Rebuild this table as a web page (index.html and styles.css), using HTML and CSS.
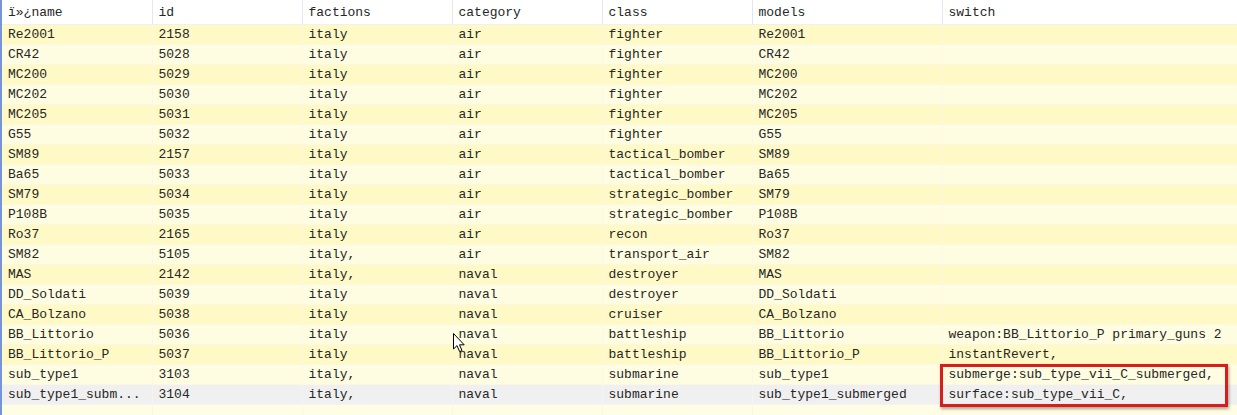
FILE: index.html
```html
<!DOCTYPE html>
<html>
<head>
<meta charset="utf-8">
<link rel="stylesheet" href="styles.css">
</head>
<body>
<div class="grid">
<table class="sheet">
<colgroup>
<col class="c-name"><col class="c-id"><col class="c-fac"><col class="c-cat"><col class="c-cls"><col class="c-mod"><col class="c-sw">
</colgroup>
<thead>
<tr><th>ï»¿name</th><th>id</th><th>factions</th><th>category</th><th>class</th><th>models</th><th>switch</th></tr>
</thead>
<tbody>
<tr><td>Re2001</td><td>2158</td><td>italy</td><td>air</td><td>fighter</td><td>Re2001</td><td></td></tr>
<tr><td>CR42</td><td>5028</td><td>italy</td><td>air</td><td>fighter</td><td>CR42</td><td></td></tr>
<tr><td>MC200</td><td>5029</td><td>italy</td><td>air</td><td>fighter</td><td>MC200</td><td></td></tr>
<tr><td>MC202</td><td>5030</td><td>italy</td><td>air</td><td>fighter</td><td>MC202</td><td></td></tr>
<tr><td>MC205</td><td>5031</td><td>italy</td><td>air</td><td>fighter</td><td>MC205</td><td></td></tr>
<tr><td>G55</td><td>5032</td><td>italy</td><td>air</td><td>fighter</td><td>G55</td><td></td></tr>
<tr><td>SM89</td><td>2157</td><td>italy</td><td>air</td><td>tactical_bomber</td><td>SM89</td><td></td></tr>
<tr><td>Ba65</td><td>5033</td><td>italy</td><td>air</td><td>tactical_bomber</td><td>Ba65</td><td></td></tr>
<tr><td>SM79</td><td>5034</td><td>italy</td><td>air</td><td>strategic_bomber</td><td>SM79</td><td></td></tr>
<tr><td>P108B</td><td>5035</td><td>italy</td><td>air</td><td>strategic_bomber</td><td>P108B</td><td></td></tr>
<tr><td>Ro37</td><td>2165</td><td>italy</td><td>air</td><td>recon</td><td>Ro37</td><td></td></tr>
<tr><td>SM82</td><td>5105</td><td>italy,</td><td>air</td><td>transport_air</td><td>SM82</td><td></td></tr>
<tr><td>MAS</td><td>2142</td><td>italy,</td><td>naval</td><td>destroyer</td><td>MAS</td><td></td></tr>
<tr><td>DD_Soldati</td><td>5039</td><td>italy</td><td>naval</td><td>destroyer</td><td>DD_Soldati</td><td></td></tr>
<tr><td>CA_Bolzano</td><td>5038</td><td>italy</td><td>naval</td><td>cruiser</td><td>CA_Bolzano</td><td></td></tr>
<tr><td>BB_Littorio</td><td>5036</td><td>italy</td><td>naval</td><td>battleship</td><td>BB_Littorio</td><td>weapon:BB_Littorio_P primary_guns 2</td></tr>
<tr><td>BB_Littorio_P</td><td>5037</td><td>italy</td><td>naval</td><td>battleship</td><td>BB_Littorio_P</td><td>instantRevert,</td></tr>
<tr><td>sub_type1</td><td>3103</td><td>italy,</td><td>naval</td><td>submarine</td><td>sub_type1</td><td>submerge:sub_type_vii_C_submerged,</td></tr>
<tr class="selected"><td>sub_type1_subm...</td><td>3104</td><td>italy,</td><td>naval</td><td>submarine</td><td>sub_type1_submerged</td><td>surface:sub_type_vii_C,</td></tr>
<tr class="blank"><td></td><td></td><td></td><td></td><td></td><td></td><td></td></tr>
</tbody>
</table>
<div class="highlight"></div>
<svg class="cursor" width="13" height="20" viewBox="0 0 13 20"><path d="M0.5 0.5 L0.5 16 L4 12.6 L6.6 18.6 L9 17.6 L6.5 11.8 L11.2 11.8 Z" fill="#fff" stroke="#000" stroke-width="1"/></svg>
</div>
</body>
</html>
```

FILE: styles.css
```css
html, body {
  margin: 0;
  padding: 0;
  background: #fffde3;
  overflow: hidden;
}
.grid {
  position: relative;
  width: 1237px;
  height: 415px;
  border-left: 2px solid #7595d6;
  box-sizing: border-box;
  overflow: hidden;
}
.sheet {
  border-collapse: collapse;
  table-layout: fixed;
  width: 1235px;
  font-family: "Liberation Mono", "Courier New", monospace;
  font-size: 13px;
  color: #262626;
}
.c-name, .c-id, .c-fac, .c-cat, .c-cls { width: 150px; }
.c-mod { width: 190px; }
.c-sw { width: 295px; }
.sheet th {
  height: 24px;
  padding: 1px 0 0 6px;
  background: #ffffff;
  font-weight: normal;
  text-align: left;
  border-right: 1px solid #e3e8f0;
  border-bottom: 1px solid #eef0f4;
  box-sizing: border-box;
  white-space: nowrap;
  overflow: hidden;
}
.sheet td {
  height: 20px;
  padding: 1px 0 0 6px;
  border-right: 1px solid #fbf7e2;
  border-bottom: 1px solid #fbf7e2;
  box-sizing: border-box;
  white-space: nowrap;
  overflow: hidden;
}
.sheet tbody tr:nth-child(odd) td { background: #fff9c6; }
.sheet tbody tr:nth-child(even) td { background: #fffde1; }
.sheet tbody tr.selected td { background: #f0f0f0; border-color: #f4f4f4; }
.sheet tbody tr.blank td { background: #fffde3; }
.highlight {
  position: absolute;
  left: 938px;
  top: 364px;
  width: 288px;
  height: 43px;
  border: 3px solid #d91c1c;
  box-shadow: 1px 2px 3px rgba(0,0,0,0.35);
  box-sizing: border-box;
}
.cursor {
  position: absolute;
  left: 451px;
  top: 333px;
}
```
